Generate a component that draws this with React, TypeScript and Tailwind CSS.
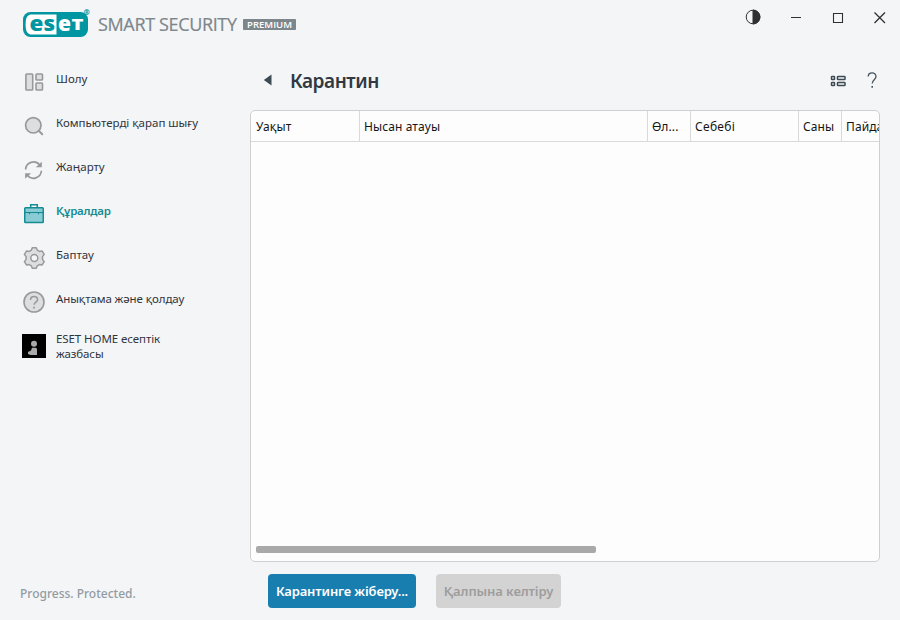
import type { ReactNode } from 'react';

const OverviewIcon = () => (
  <svg width="24" height="24" viewBox="0 0 24 24" fill="#dddee0" stroke="#999" strokeWidth="1.6">
    <rect x="3.9" y="4" width="6.8" height="16" rx="0.8" />
    <rect x="14" y="4" width="6.5" height="6" rx="0.8" />
    <rect x="14" y="13" width="6.5" height="7" rx="0.8" />
  </svg>
);

const ScanIcon = () => (
  <svg width="24" height="24" viewBox="0 0 24 24" fill="none" stroke="#999" strokeWidth="1.7">
    <circle cx="11.3" cy="11.3" r="7.7" fill="#dddee0" />
    <path d="M16.8 16.8l3.4 3.4" strokeWidth="2" strokeLinecap="round" />
  </svg>
);

const UpdateIcon = () => (
  <svg width="24" height="24" viewBox="0 0 24 24" fill="none" stroke="#999" strokeWidth="1.7">
    <path d="M3.6 11.5a7.9 7.9 0 0 1 14-4.700" />
    <path d="M19.4 12.8a7.9 7.9 0 0 1-14 4.500" />
    <path d="M19.8 3.800v5.400h-6z" fill="#999" stroke="none" />
    <path d="M3.100 20.700v-5.500h6z" fill="#999" stroke="none" />
  </svg>
);

const ToolsIcon = () => (
  <svg width="24" height="24" viewBox="0 0 24 24" fill="none" stroke="#148c92" strokeWidth="1.5">
    <path d="M8.7 6V2.800h6.600V6" />
    <rect x="2.750" y="5.800" width="18.500" height="14.700" rx="0.800" fill="#8accd5" />
    <path d="M3 10.500h18" strokeWidth="1.100" />
    <path d="M7.500 10.500v1.800M16.500 10.500v1.800" strokeWidth="1.100" />
  </svg>
);

const SetupIcon = () => (
  <svg width="24" height="24" viewBox="0 0 24 24" fill="#dddee0" stroke="#999" strokeWidth="1.5" strokeLinejoin="round">
    <path d="M10.300 1.700h4l.9 2.400 2.300 1.300 2.500-.5 2.200 3.500-1.700 2.200v2.800l1.700 2.200-2.200 3.500-2.500-.5-2.300 1.300-.9 2.400h-4l-.9-2.400L7.100 18.600l-2.500.5-2.200-3.500 1.700-2.200v-2.800L2.400 8.400l2.200-3.500 2.500.5 2.300-1.300z" />
    <circle cx="12.300" cy="12" r="3.500" fill="#f4f5f7" />
  </svg>
);

const HelpIcon = () => (
  <svg width="24" height="24" viewBox="0 0 24 24" fill="none" stroke="#999" strokeWidth="1.6">
    <circle cx="12" cy="12" r="10" fill="#dddee0" />
    <path d="M8.500 9.900c0-4.700 7.100-4.400 7.100-.4 0 2.600-3.500 2.500-3.500 5.300" />
    <path d="M12 16.700v1.700" strokeWidth="1.800" />
  </svg>
);

const AccountIcon = () => (
  <svg width="24" height="24" viewBox="0 0 24 24">
    <path fill="#000" d="M0 0h24v24H0z" />
    <circle cx="12" cy="9.800" r="3" fill="#aaa" />
    <path fill="#aaa" d="M10 13.800h4l1 1.200v6H8.500L6 20v-2l3-1.500z" />
  </svg>
);

const Item = ({ icon, children, className = '' }: { icon: ReactNode; children: ReactNode; className?: string }) => (
  <a className={`flex h-11 items-center gap-[10px] ${className}`}>
    {icon}
    <span className="-mt-[7px] whitespace-nowrap">{children}</span>
  </a>
);

const Logo = () => (
  <svg width="72" height="30" viewBox="0 0 72 30" fontFamily="'Open Sans'">
    <rect x="0" y="4" width="65" height="25" rx="7.5" fill="#0096a1" />
    <path d="M33.500 6.500H9C4.500 6.500 2.600 9 2.600 16.500S4.500 26.500 9 26.500h24.500z" fill="#fff" />
    <text x="6.500" y="22.500" fontSize="21.500" fontWeight="800" fill="#0096a1" textLength="25.500" lengthAdjust="spacingAndGlyphs">es</text>
    <text x="35" y="22.500" fontSize="21.500" fontWeight="800" fill="#fff" textLength="13" lengthAdjust="spacingAndGlyphs">e</text>
    <text x="48.500" y="22.400" fontSize="16.500" fontWeight="800" fill="#fff" textLength="12" lengthAdjust="spacingAndGlyphs">T</text>
    <text x="60.800" y="7" fontSize="7" fill="#0096a1" stroke="#0096a1" strokeWidth="0.200">®</text>
  </svg>
);

export default function App() {
  return (
    <div className="flex h-[620px] w-[900px] flex-col overflow-hidden bg-[#f4f5f7] font-['Noto_Sans','Open_Sans',sans-serif] text-[#30343c]">
      <header className="flex h-[60px] items-start justify-between">
        <div className="flex items-center pt-2 pl-[23px]">
          <Logo />
          <svg className="ml-[3px]" width="200" height="30" viewBox="0 0 200 30" fontFamily="'Open Sans'">
            <text x="0" y="23" fontSize="18" fill="#7d868b" stroke="#7d868b" strokeWidth="0.200" textLength="139" lengthAdjust="spacing">SMART SECURITY</text>
            <rect x="145" y="11" width="53" height="11" rx="0.800" fill="#7d868b" />
            <text x="149" y="19.500" fontSize="8" fontWeight="600" fill="#fff" textLength="45" lengthAdjust="spacingAndGlyphs">PREMIUM</text>
          </svg>
        </div>
        <div className="flex pt-2 pr-[10px] text-[#303030]">
          <svg width="148" height="20" viewBox="0 0 148 20" fill="none" stroke="currentColor" strokeWidth="1">
            <circle cx="11" cy="9" r="6.800" />
            <path d="M11 2a7 7 0 0 1 0 14z" fill="currentColor" />
            <path d="M49 9.500h10M91.500 5.500h9v9h-9z" strokeWidth="1.100" />
            <path d="M132.500 4.500l10.500 10.500M143 4.500L132.500 15" strokeWidth="1.300" />
          </svg>
        </div>
      </header>
      <div className="flex flex-1">
        <aside className="flex w-[250px] flex-col justify-between">
          <nav className="flex flex-col pl-[22px] text-[11.5px] leading-[15px]">
            <Item icon={<OverviewIcon />}>Шолу</Item>
            <Item icon={<ScanIcon />}>Компьютерді қарап шығу</Item>
            <Item icon={<UpdateIcon />}>Жаңарту</Item>
            <Item icon={<ToolsIcon />} className="font-semibold tracking-[-0.25px] text-[#148c92]">Құралдар</Item>
            <Item icon={<SetupIcon />}>Баптау</Item>
            <Item icon={<HelpIcon />} className="tracking-[-0.1px]">Анықтама және қолдау</Item>
            <a className="flex h-11 items-center gap-[10px] tracking-[-0.08px]">
              <AccountIcon />
              <span className="flex flex-col"><span>ESET HOME есептік</span><span>жазбасы</span></span>
            </a>
          </nav>
          <p className="pb-[17px] pl-5 text-[12px] leading-[18px] font-medium text-[#929ba2]">Progress. Protected.</p>
        </aside>
        <main className="flex w-[630px] flex-col">
          <div className="flex h-[50px] items-start">
            <svg className="mt-[14px] ml-[13px]" width="9" height="12" viewBox="0 0 9 12"><path d="M8.500 .5v11L.800 6z" fill="#3c4a54" /></svg>
            <h1 className="mt-[6px] ml-[18px] text-[19px] leading-[30px] font-semibold tracking-[-0.45px] text-[#303942]">Карантин</h1>
            <svg className="mt-[15px] ml-auto" width="16" height="12" viewBox="0 0 16 12" fill="none" stroke="#3c4a54" strokeWidth="1.500">
              <rect x="1.500" y="1.500" width="3" height="3" rx="0.600" /><rect x="7.500" y="1.500" width="7.500" height="3" rx="0.600" />
              <rect x="1.500" y="7.500" width="3" height="3" rx="0.600" /><rect x="7.500" y="7.500" width="7.500" height="3" rx="0.600" />
            </svg>
            <svg className="mt-[12px] mr-[3px] ml-[21px]" width="10" height="17" viewBox="0 0 10 17" fill="none" stroke="#46545e" strokeWidth="1.300">
              <path d="M1.200 4.500C1.200 -.3 9 -.3 9 4.500 9 7.500 5.200 8 5.200 11.500" /><path d="M5.200 14v1.700" strokeWidth="1.600" />
            </svg>
          </div>
          <section className="flex h-[452px] flex-col justify-between overflow-hidden rounded-[5px] border border-[#cfd0d1] bg-[#fdfdfd]">
            <div className="flex h-[31px] border-b border-[#d9d9d9] text-[12px] leading-[31px] tracking-[0.1px] whitespace-nowrap text-[#151515] *:shrink-0 *:border-r *:border-[#d9d9d9] *:pl-1">
              <div className="w-[109px] pl-[5px]!">Уақыт</div>
              <div className="w-[288px]">Нысан атауы</div>
              <div className="w-[43px]">Өл...</div>
              <div className="w-[108px] tracking-[0.3px]">Себебі</div>
              <div className="w-[43px]">Саны</div>
              <div className="w-[108px]">Пайда</div>
            </div>
            <div className="mb-2 ml-[5px] h-[7px] w-[340px] rounded-[2px] bg-[#a9a9a9]" />
          </section>
          <div className="mt-3 ml-[18px] flex gap-5 text-[13px] font-semibold tracking-[-0.14px] whitespace-nowrap">
            <button className="h-[34px] w-[148px] rounded-[4px] bg-[#187eb0] pt-px text-white">Карантинге жіберу...</button>
            <button className="h-[34px] w-[125px] rounded-[4px] bg-[#d3d3d3] pt-px tracking-[-0.08px] text-[#9d9d9d]">Қалпына келтіру</button>
          </div>
        </main>
      </div>
    </div>
  );
}
